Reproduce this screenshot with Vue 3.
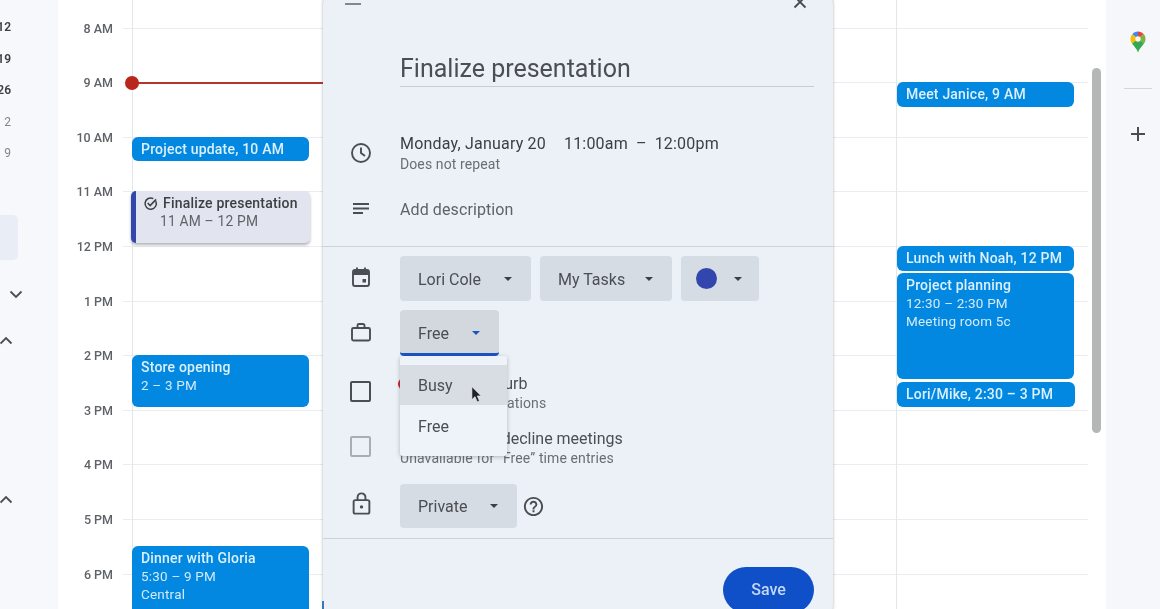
<script setup>
const hours = ['', '8 AM', '9 AM', '10 AM', '11 AM', '12 PM', '1 PM', '2 PM', '3 PM', '4 PM', '5 PM', '6 PM']
const events = [
  { id: 1, lines: ['Project update, 10 AM'], left: 74, top: 137, width: 177, height: 24 },
  { id: 2, lines: ['Store opening', '2 – 3 PM'], left: 74, top: 355, width: 177, height: 52 },
  { id: 3, lines: ['Dinner with Gloria', '5:30 – 9 PM', 'Central'], left: 74, top: 546, width: 177, height: 80 },
  { id: 4, lines: ['Meet Janice, 9 AM'], left: 839, top: 82, width: 177, height: 25 },
  { id: 5, lines: ['Lunch with Noah, 12 PM'], left: 839, top: 246, width: 177, height: 25 },
  { id: 6, lines: ['Project planning', '12:30 – 2:30 PM', 'Meeting room 5c'], left: 839, top: 273, width: 177, height: 106 },
  { id: 7, lines: ['Lori/Mike, 2:30 – 3 PM'], left: 839, top: 382, width: 178, height: 25 }
]
const pos = (e) => ({ left: e.left + 'px', top: e.top + 'px', width: e.width + 'px', height: e.height + 'px' })
</script>

<template>
  <div class="page">
    <aside class="left">
      <div class="nums">
        <span class="bold">12</span><span class="bold">19</span><span class="bold">26</span>
        <span class="dim">2</span><span class="dim">9</span>
      </div>
      <div class="side-block"></div>
      <svg class="chev chev-down" viewBox="0 0 14 9"><path d="M1.5 1.5 7 7l5.5-5.5" /></svg>
      <svg class="chev chev-up1" viewBox="0 0 14 9"><path d="M1.5 7.5 7 2l5.5 5.5" /></svg>
      <svg class="chev chev-up2" viewBox="0 0 14 9"><path d="M1.5 7.5 7 2l5.5 5.5" /></svg>
    </aside>

    <main class="grid">
      <div v-for="h in hours" :key="h" class="hour">
        <span class="hour-label">{{ h }}</span>
        <span class="hour-line"></span>
      </div>
      <i class="vline vline-a"></i>
      <i class="vline vline-b"></i>
      <div class="now"></div>
      <div class="now-dot"></div>

      <div v-for="e in events" :key="e.id" class="event" :style="pos(e)">
        <div v-for="(l, i) in e.lines" :key="i" :class="{ 'event-head': i === 0 }">{{ l }}</div>
      </div>

      <div class="task">
        <div class="task-title">
          <svg class="task-check" viewBox="0 0 16 16"><path d="M13.600 5.500A6 6 0 1 1 11 2.800" /><path d="M5 7.500 7.600 10.200 14 3.600" /></svg>
          Finalize presentation
        </div>
        <div class="task-time">11 AM – 12 PM</div>
      </div>

      <div class="scrollbar"></div>
    </main>

    <aside class="right">
      <svg class="maps" viewBox="0 0 16 22">
        <path fill="#34a853" d="M2 12.500C4 15.500 6.800 17.500 8 21.500c1.200-4 4-6 6-9L8 7z" />
        <path fill="#4285f4" d="M8 .5C5.700.5 3.600 1.500 2.300 3.200L8 8z" />
        <path fill="#ea4335" d="M8 .5V8l5.600-4.900C12.200 1.500 10.200.5 8 .5z" />
        <path fill="#fbbc04" d="M2.300 3.200C1.200 4.500.5 6.200.5 8c0 1.700.6 3.200 1.500 4.500L8 8z" />
        <path fill="#7cb342" d="M13.600 3.100 8 8l6 4.500c.9-1.300 1.500-2.800 1.500-4.500 0-1.900-.7-3.600-1.900-4.900z" />
        <circle cx="8" cy="8" r="2.700" fill="#fdf6e3" />
      </svg>
      <div class="right-rule"></div>
      <svg class="plus" viewBox="0 0 16 16"><path d="M8 1v14M1 8h14" /></svg>
    </aside>

    <section class="dialog">
      <header class="d-head">
        <svg class="i-menu" viewBox="0 0 16 8"><path d="M0 1h16M0 6h16" /></svg>
        <svg class="i-close" viewBox="0 0 14 14"><path d="M1.500 1.500l11 11M12.500 1.500l-11 11" /></svg>
      </header>

      <div class="d-title">Finalize presentation</div>

      <div class="row row-date">
        <div class="ico">
          <svg class="i24" viewBox="0 0 24 24"><circle cx="12" cy="12" r="9" /><path d="M12 6.500V12l4 3" /></svg>
        </div>
        <div>
          <div class="date-line"><span>Monday, January 20</span><span class="gap-time">11:00am</span><span class="dash">–</span><span>12:00pm</span></div>
          <div class="sub">Does not repeat</div>
        </div>
      </div>

      <div class="row row-desc">
        <div class="ico">
          <svg class="i24" viewBox="0 0 24 24"><path d="M4 7h16M4 11.500h16M4 16h10" /></svg>
        </div>
        <div class="desc">Add description</div>
      </div>

      <div class="divider"></div>

      <div class="row row-pills">
        <div class="ico ico-up">
          <svg class="i24" viewBox="0 0 24 24">
            <rect x="4" y="5" width="16" height="16" rx="2" />
            <path class="fill" d="M4 5h16v5H4z" />
            <path d="M8 2.500V5M16 2.500V5" />
            <rect class="fill" x="13.500" y="14" width="3.500" height="3.500" />
          </svg>
        </div>
        <div class="pill p-owner"><span>Lori Cole</span><i class="caret"></i></div>
        <div class="pill p-cal"><span>My Tasks</span><i class="caret"></i></div>
        <div class="pill p-color"><i class="dot"></i><i class="caret"></i></div>
      </div>

      <div class="row row-free">
        <div class="ico ico-up">
          <svg class="i24" viewBox="0 0 24 24"><rect x="3" y="8" width="18" height="12.500" rx="1.500" /><path d="M8.500 8V5.500A1.500 1.500 0 0 1 10 4h4a1.500 1.500 0 0 1 1.500 1.500V8" /></svg>
        </div>
        <div class="pill p-free"><span>Free</span><i class="caret caret-blue"></i></div>
      </div>

      <div class="row row-check">
        <div class="ico ico-check"><i class="box"></i></div>
        <div>
          <div class="check-title"><i class="dnd"></i>Do not disturb</div>
          <div class="sub">Mute chat notifications</div>
        </div>
      </div>

      <div class="row row-check2">
        <div class="ico ico-check"><i class="box box-light"></i></div>
        <div>
          <div class="check-title">Automatically decline meetings</div>
          <div class="sub">Unavailable for “Free” time entries</div>
        </div>
      </div>

      <div class="row row-private">
        <div class="ico ico-lock">
          <svg class="i-lock" viewBox="0 0 24 24"><rect x="5" y="9" width="14" height="12" rx="1.500" /><path d="M8.500 9V6.500a3.500 3.500 0 0 1 7 0V9" /><circle class="fill" cx="12" cy="15" r="1.500" /></svg>
        </div>
        <div class="pill p-private"><span>Private</span><i class="caret"></i></div>
        <svg class="i-help" viewBox="0 0 24 24"><path d="M11 18h2v-2h-2v2zm1-16C6.480 2 2 6.480 2 12s4.480 10 10 10 10-4.480 10-10S17.520 2 12 2zm0 18c-4.410 0-8-3.590-8-8s3.590-8 8-8 8 3.590 8 8-3.590 8-8 8zm0-14c-2.210 0-4 1.790-4 4h2c0-1.100.9-2 2-2s2 .9 2 2c0 2-3 1.750-3 5h2c0-2.250 3-2.500 3-5 0-2.210-1.790-4-4-4z" /></svg>
      </div>

      <div class="divider divider-b"></div>

      <footer class="d-foot"><button class="save">Save</button></footer>

      <div class="menu">
        <div class="menu-item menu-active">Busy</div>
        <div class="menu-item">Free</div>
        <svg class="cursor" viewBox="0 0 12 19"><path d="M1 1v14l3.400-3.200 2.400 5.700 2.400-1-2.400-5.500H11z" /></svg>
      </div>
    </section>
  </div>
</template>

<style>
html, body { margin: 0; overflow: hidden; background: #fff; }
</style>

<style scoped>
.page {
  position: relative;
  display: flex;
  width: 1160px;
  height: 609px;
  overflow: hidden;
  font-family: Roboto, "Liberation Sans", sans-serif;
  color: #46494d;
  filter: blur(0.35px);
}

/* left rail */
.left { position: relative; flex: 0 0 58px; background: #f6f8fb; }
.nums {
  display: flex;
  flex-direction: column;
  width: 11px;
  padding-top: 19px;
  align-items: flex-end;
  font-size: 12px;
  line-height: 16px;
  row-gap: 15.500px;
}
.nums span { display: block; white-space: nowrap; }
.bold { font-weight: 600; color: #3c4043; }
.dim { color: #80868b; }
.side-block { position: absolute; left: -10px; top: 215px; width: 28px; height: 45px; border-radius: 5px; background: #e8edf6; }
.chev { position: absolute; width: 14px; height: 9px; fill: none; stroke: #4a4e52; stroke-width: 1.800; }
.chev-down { left: 9px; top: 290px; }
.chev-up1 { left: -1px; top: 336px; }
.chev-up2 { left: -1px; top: 495px; }

/* day grid */
.grid { position: relative; flex: 1 1 auto; padding: 0 18px 0 0; margin-top: -27px; background: #fff; }
.hour { display: flex; height: 54.600px; }
.hour-label {
  flex: 0 0 55px;
  margin-top: -7px;
  height: 16px;
  line-height: 16px;
  text-align: right;
  font-size: 12.500px;
  font-weight: 500;
  color: #5f6368;
}
.hour-line { flex: 1 1 auto; margin-left: 10px; border-top: 1px solid #e9ecf0; }
.hour:first-child .hour-line { border-top: 0; }
.vline { position: absolute; top: 0; bottom: 0; width: 1px; background: #e3e7ec; }
.vline-a { left: 74px; }
.vline-b { left: 838px; }
.now { position: absolute; left: 74px; top: 109px; width: 195px; height: 2px; background: #b3352b; }
.now-dot { position: absolute; left: 67px; top: 103px; width: 14px; height: 14px; border-radius: 50%; background: #b9261c; }

.event {
  position: absolute;
  box-sizing: border-box;
  margin-top: 27px;
  padding: 3px 9px;
  overflow: hidden;
  border-radius: 6px;
  background: #0288e0;
  color: #d3eafa;
  font-size: 13.500px;
  line-height: 18px;
  letter-spacing: 0.2px;
}
.event-head { font-size: 14px; font-weight: 500; color: #dcf0fc; white-space: nowrap; }

.task {
  position: absolute;
  left: 73px;
  top: 218px;
  box-sizing: border-box;
  width: 179px;
  height: 52px;
  padding: 3px 8px 0 11px;
  border-left: 5px solid #3346ad;
  border-radius: 5px;
  background: #e2e4ef;
  box-shadow: 0 2px 3px rgba(60, 64, 67, 0.4);
  font-size: 14px;
  line-height: 18px;
  letter-spacing: 0.2px;
}
.task-title { display: flex; align-items: center; gap: 5px; margin-left: -4px; font-weight: 500; color: #3c4043; white-space: nowrap; }
.task-check { width: 15px; height: 15px; fill: none; stroke: #3c4043; stroke-width: 1.600; }
.task-time { margin-left: 13px; font-size: 13.800px; color: #5f6368; }

.scrollbar { position: absolute; left: 1034px; top: 95px; width: 9px; height: 365px; border-radius: 5px; background: #b5b7b7; }

/* right rail */
.right { position: relative; flex: 0 0 54px; box-sizing: border-box; padding-left: 10px; display: flex; flex-direction: column; align-items: center; background: #f5f7fa; }
.maps { width: 16px; height: 22px; margin-top: 31px; }
.right-rule { width: 28px; height: 1px; margin-top: 35px; background: #d3d6da; }
.plus { width: 16px; height: 16px; margin-top: 37px; fill: none; stroke: #4a4e52; stroke-width: 2; }

/* dialog */
.dialog {
  position: absolute;
  left: 323px;
  top: -20px;
  box-sizing: border-box;
  width: 510px;
  height: 650px;
  border-radius: 26px;
  background: #ecf1f8;
  box-shadow: 0 0 3px rgba(60, 64, 67, 0.45);
}
.dialog::after {
  content: "";
  position: absolute;
  left: -1px;
  top: 621px;
  width: 2px;
  height: 10px;
  background: #3a78ad;
}
.d-head { display: flex; justify-content: space-between; align-items: center; height: 44px; padding: 0 26px 0 22px; }
.i-menu { width: 16px; height: 8px; fill: none; stroke: #606468; stroke-width: 1.600; }
.i-close { width: 14px; height: 14px; fill: none; stroke: #46494d; stroke-width: 1.800; }

.d-title {
  box-sizing: border-box;
  height: 44px;
  margin: 19px 19px 0 77px;
  padding-top: 10px;
  border-bottom: 1px solid #c8cdd3;
  font-size: 25px;
  line-height: 32px;
  color: #4b4e52;
}

.row { display: flex; }
.ico { flex: 0 0 77px; display: flex; justify-content: center; align-items: center; padding-right: 1px; box-sizing: border-box; }
.ico-up { padding-bottom: 3px; }
.ico-check { padding: 0 2px 6px 0; }
.ico-lock { padding-bottom: 5px; }
.i24 { width: 24px; height: 24px; fill: none; stroke: #4a4e52; stroke-width: 1.900; }
.i-lock { width: 27px; height: 27px; fill: none; stroke: #4a4e52; stroke-width: 1.700; }
.i24 .fill, .i-lock .fill { fill: #4a4e52; stroke: none; }

.row-date { margin-top: 46px; }
.date-line { font-size: 16px; line-height: 22px; color: #3c4043; white-space: nowrap; letter-spacing: 0.2px; }
.gap-time { margin-left: 18px; }
.dash { margin: 0 8px; }
.sub { font-size: 14px; line-height: 18px; color: #6a6e73; white-space: nowrap; letter-spacing: 0.1px; }

.row-desc { margin-top: 24px; height: 24px; align-items: center; }
.desc { font-size: 16px; letter-spacing: 0.1px; color: #5f6368; }

.divider { height: 1px; margin-top: 25px; background: #cdd2d8; }

.pill {
  display: flex;
  align-items: center;
  justify-content: space-between;
  box-sizing: border-box;
  height: 45px;
  padding: 1px 19px 0 18px;
  border-radius: 4px;
  background: #d6dce3;
  font-size: 16px;
  color: #4b4e52;
}
.caret { width: 0; height: 0; border: 4.500px solid transparent; border-top-color: #3c4043; border-bottom: 0; }
.caret-blue { border-top-color: #1a55c4; }
.dot { width: 21px; height: 21px; border-radius: 50%; background: #3346ad; }

.row-pills { margin-top: 9px; gap: 9px; }
.row-pills .ico { margin-right: -9px; }
.p-owner { width: 131px; }
.p-cal { width: 132px; }
.p-color { width: 78px; padding: 0 17px 0 15px; }

.row-free { margin-top: 9px; }
.p-free { width: 99px; height: 46px; padding-top: 3px; background: #d3d8de; border-bottom: 3px solid #1a55c4; }

.row-check { margin-top: 18px; height: 40px; }
.check-title { display: flex; align-items: center; font-size: 16px; line-height: 20px; color: #4b4e52; white-space: nowrap; }
.dnd { width: 12px; height: 12px; margin: 0 17px 0 -2px; border-radius: 50%; background: #c5221f; }
.box { width: 17px; height: 17px; border: 2px solid #4a4e52; border-radius: 2px; }
.box-light { border-color: #a9aeb4; }

.row-check2 { margin-top: 15px; height: 40px; }

.row-private { margin-top: 15px; align-items: center; }
.p-private { width: 117px; height: 44px; padding-top: 0; }
.i-help { width: 23px; height: 23px; margin-left: 5px; fill: #4a4e52; }

.divider-b { margin-top: 10px; }

.d-foot { display: flex; justify-content: flex-end; padding: 28px 19px 0 0; }
.save {
  width: 91px;
  height: 46px;
  padding: 0 0 2px;
  border: 0;
  border-radius: 23px;
  background: #0f4fc7;
  color: #c3d8f6;
  font-family: inherit;
  font-size: 16px;
  font-weight: 500;
}

.menu {
  position: absolute;
  left: 77px;
  top: 376px;
  box-sizing: border-box;
  width: 107px;
  height: 100px;
  padding-top: 9px;
  border-radius: 3px;
  background: #eef3f9;
  box-shadow: 0 1px 4px rgba(60, 64, 67, 0.35);
}
.menu-item { height: 41px; padding-left: 18px; font-size: 16px; line-height: 44px; color: #4b4e52; }
.menu-active { height: 40px; line-height: 42px; background: #d8dde4; }
.cursor { position: absolute; left: 71px; top: 29px; width: 11px; height: 19px; fill: #1f2124; stroke: #eef3f9; stroke-width: 0.600; }
</style>
